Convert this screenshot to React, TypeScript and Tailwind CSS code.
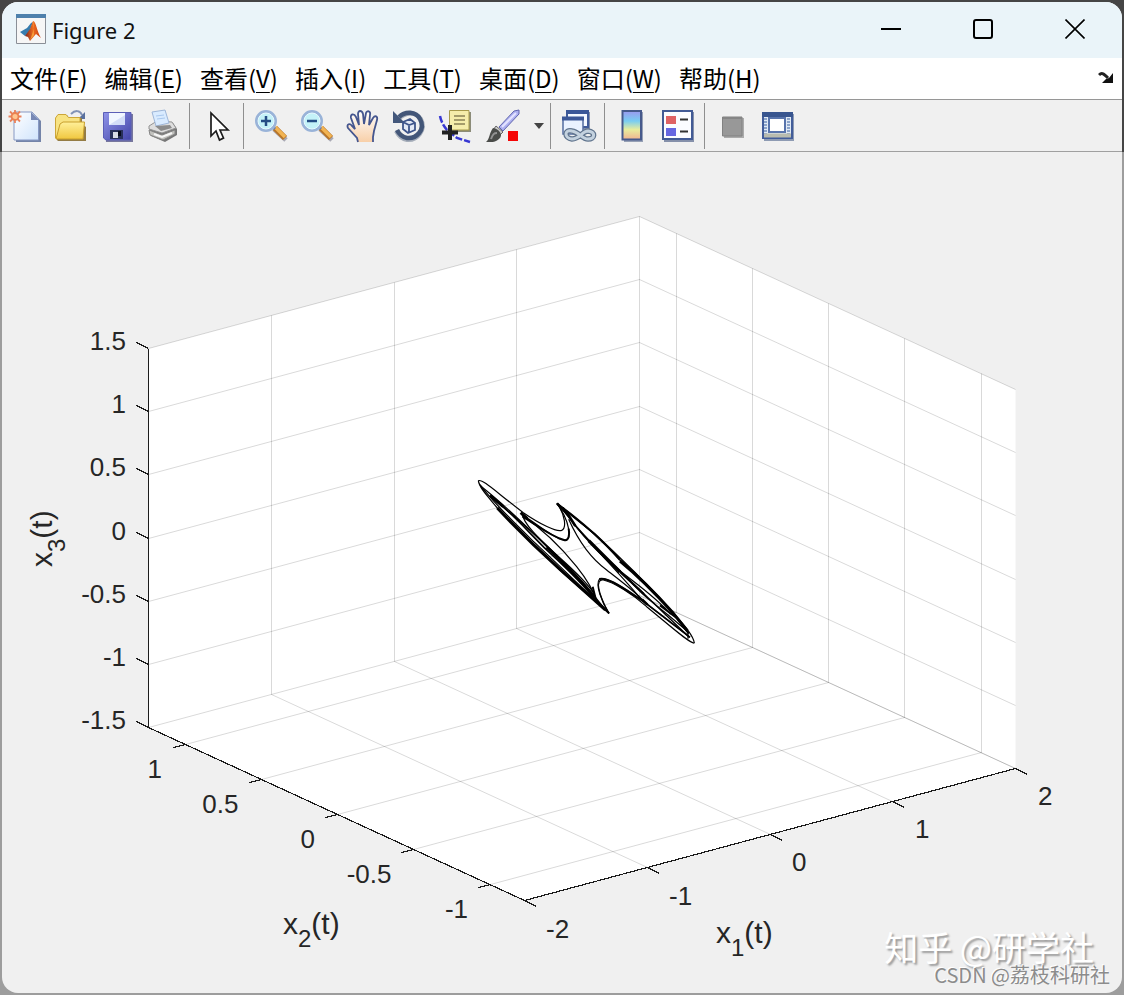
import React from "react";

type Point = [number, number];

type MenuItem = { label: string; mnemonic: string };

const menus: MenuItem[] = [
  { label: "文件", mnemonic: "F" },
  { label: "编辑", mnemonic: "E" },
  { label: "查看", mnemonic: "V" },
  { label: "插入", mnemonic: "I" },
  { label: "工具", mnemonic: "T" },
  { label: "桌面", mnemonic: "D" },
  { label: "窗口", mnemonic: "W" },
  { label: "帮助", mnemonic: "H" },
];

// corners of the axes box on the canvas
const BACK: Point = [639, 216];
const LEFT: Point = [-491, 132];
const RIGHT: Point = [376, 173];
const HEIGHT = 379;

const x1Ticks = ["-2", "-1", "0", "1", "2"];
const x2Ticks = ["1", "0.5", "0", "-0.5", "-1"];
const x3Ticks = ["1.5", "1", "0.5", "0", "-0.5", "-1", "-1.5"];

// a: share of the way to the left corner, b: to the right corner, c: down
const at = (a: number, b: number, c: number): Point => [
  Math.round(BACK[0] + LEFT[0] * a + RIGHT[0] * b) + 0.5,
  Math.round(BACK[1] + LEFT[1] * a + RIGHT[1] * b + HEIGHT * c) + 0.5,
];

const x2Share = (i: number) => (36.5 + i * 76.3) / 376;

const Line = ({ from, to }: { from: Point; to: Point }) => (
  <line x1={from[0]} y1={from[1]} x2={to[0]} y2={to[1]} />
);

const Tick = ({ from, dx, dy }: { from: Point; dx: number; dy: number }) => (
  <line x1={from[0]} y1={from[1]} x2={from[0] + dx} y2={from[1] + dy} />
);

const AxisTitle = ({ n }: { n: number }) => (
  <>
    x
    <tspan dy="13" fontSize="24">
      {n}
    </tspan>
    <tspan dy="-13">(t)</tspan>
  </>
);

const Attractor = () => (
  <g
    transform="translate(460 460) scale(0.33333)"
    fill="none"
    stroke="#000"
    strokeWidth="3.600"
    strokeLinejoin="round"
  >
    {/* left lobe */}
    <path d="M55 62C68 56 110 98 190 158C240 192 290 217 305 211C320 204 316 165 291 130" />
    <path d="M186 163C220 186 260 218 295 235C315 244 326 241 327 226C328 198 312 160 291 130" />
    <path d="M188 170C225 192 270 228 312 240C326 244 330 225 326 206" strokeWidth="6" />
    <path d="M55 62C58 84 84 110 112 144C170 208 250 284 310 340L447 460" />
    <path d="M112 144C170 206 240 274 300 328L436 450" strokeWidth="9" />
    <path d="M60 74C90 116 150 176 214 238C286 306 350 366 432 446" />
    <path d="M62 78C105 112 165 166 232 232C300 300 350 350 402 410" />
    <path d="M90 108C150 158 236 232 296 292C346 340 390 390 438 452" strokeWidth="4" />
    <path d="M110 124C160 164 190 200 252 262C310 316 362 362 404 418" strokeWidth="5" />
    <path d="M186 160C190 190 230 230 300 294C345 334 385 375 402 400" />
    <path d="M186 166C245 206 308 268 350 320C385 364 400 390 408 420" />
    <path d="M260 262C310 308 362 358 404 412" strokeWidth="8" />
    <path d="M398 380L408 420L447 460" strokeWidth="6" />
    <path d="M90 106L130 140M182 158L202 176" strokeWidth="9" />
    {/* right lobe */}
    <path d="M703 549C692 552 650 514 560 440C520 404 460 366 430 360C406 356 412 398 447 460" />
    <path d="M690 532C650 500 570 438 500 390C460 366 430 350 418 358C406 372 424 425 447 460" />
    <path d="M418 357C440 350 480 378 548 422" strokeWidth="6" />
    <path d="M556 428C600 464 650 500 690 532" strokeWidth="5" />
    <path d="M703 549C700 528 676 500 640 458C580 392 490 300 404 222C350 180 320 156 291 130" />
    <path d="M300 138C340 166 374 196 404 222C430 246 456 272 480 300" strokeWidth="6" />
    <path d="M480 303C530 344 590 404 640 460L682 512" strokeWidth="9" />
    <path d="M291 130C350 174 420 236 480 300C560 370 630 440 686 520" />
    <path d="M302 140C330 180 390 246 450 304C520 370 580 430 688 532" strokeWidth="4" />
    <path d="M310 142C336 194 400 264 460 316C520 366 580 404 632 462" />
    <path d="M326 178C354 240 390 294 440 330C480 362 520 390 556 428" />
    <path d="M340 190C380 240 470 330 550 425" />
    <path d="M386 242C420 276 450 306 480 336" strokeWidth="10" />
    <path d="M480 336L552 402M600 436L650 474L686 520" strokeWidth="6" />
    <path d="M500 350C545 410 600 440 684 516V536" />
    <path d="M291 130L326 166L346 198M546 418L562 434" strokeWidth="8" />
  </g>
);

const Plot = () => (
  <svg
    viewBox="2 152 1120 841"
    className="block w-full font-['Liberation_Sans',Arial,sans-serif]"
    role="img"
    aria-label="Figure 2"
  >
    <path d="M639.5 216.5L1015.5 389.5V768L525 901L148.5 727.5V348.5Z" fill="#fff" />

    <g stroke="#000" strokeOpacity="0.15">
      {x1Ticks.map((t, i) => (
        <React.Fragment key={t}>
          <Line from={at(i / 4, 0, 0)} to={at(i / 4, 0, 1)} />
          <Line from={at(i / 4, 0, 1)} to={at(i / 4, 1, 1)} />
        </React.Fragment>
      ))}
      {x2Ticks.map((t, i) => (
        <React.Fragment key={t}>
          <Line from={at(0, x2Share(i), 0)} to={at(0, x2Share(i), 1)} />
          <Line from={at(0, x2Share(i), 1)} to={at(1, x2Share(i), 1)} />
        </React.Fragment>
      ))}
      {x3Ticks.map((t, i) => (
        <React.Fragment key={t}>
          <Line from={at(1, 0, i / 6)} to={at(0, 0, i / 6)} />
          <Line from={at(0, 0, i / 6)} to={at(0, 1, i / 6)} />
        </React.Fragment>
      ))}
    </g>

    <g stroke="#1c1c1c" strokeWidth="1.200" shapeRendering="crispEdges">
      <Line from={at(1, 0, 0)} to={at(1, 0, 1)} />
      <Line from={at(1, 0, 1)} to={at(1, 1, 1)} />
      <Line from={at(1, 1, 1)} to={at(0, 1, 1)} />
      {x3Ticks.map((t, i) => (
        <Tick key={t} from={at(1, 0, i / 6)} dx={-12} dy={-6} />
      ))}
      {x2Ticks.map((t, i) => (
        <Tick key={t} from={at(1, x2Share(i), 1)} dx={-12} dy={3} />
      ))}
      {x1Ticks.map((t, i) => (
        <Tick key={t} from={at(1 - i / 4, 1, 1)} dx={12} dy={6} />
      ))}
    </g>

    <Attractor />

    <g fill="#262626" fontSize="26">
      {x3Ticks.map((t, i) => (
        <text key={t} x="126" y={350 + i * 63.2} textAnchor="end">
          {t}
        </text>
      ))}
      {x2Ticks.map((t, i) => (
        <text key={t} x={162 + i * 76.5} y={778 + i * 35} textAnchor="end">
          {t}
        </text>
      ))}
      {x1Ticks.map((t, i) => (
        <text key={t} x={546 + i * 123} y={938 - i * 33.3}>
          {t}
        </text>
      ))}
    </g>
    <g fill="#262626" fontSize="30">
      <text x="283" y="934">
        <AxisTitle n={2} />
      </text>
      <text x="716" y="943">
        <AxisTitle n={1} />
      </text>
      <text transform="translate(52 567) rotate(-90)">
        <AxisTitle n={3} />
      </text>
    </g>
  </svg>
);

const NewIcon = () => (
  <>
    <path d="M7 4H25L32 11V32H7Z" fill="#7484a8" />
    <path d="M5 2H23L29.500 9V30H5Z" fill="url(#page)" stroke="#8799c4" />
    <path d="M22 2V10H30Z" fill="#7788b5" />
    <path d="M6 0V13M-.5 6.500H12.500M1 1.500L11 11.500M11 1.500L1 11.500" stroke="#e9825c" strokeWidth="1.800" />
    <circle cx="6" cy="6.500" r="3.500" fill="#ffc690" stroke="#ea8152" strokeWidth="1.800" />
  </>
);

const OpenIcon = () => (
  <>
    <path d="M16 4C20 0 25 0 27 5" fill="none" stroke="#8293b6" strokeWidth="2" />
    <path d="M30 2V9H23Z" fill="#5b719e" />
    <path d="M2 30V8L4 5H12L14 8H27V14L31 17V31H3Z" fill="#947c45" />
    <path d="M.5 28V8L3 4.500H11L13.500 7.500H25V28Z" fill="#f8e382" stroke="#cda638" />
    <path d="M1 29L5 14L8 12H29.500L28 29Z" fill="url(#folder)" stroke="#c89f2d" />
  </>
);

const SaveIcon = () => (
  <>
    <path d="M4 4H32V32H5Z" fill="#77779d" />
    <path d="M2.500 2.500H30V30H5L2.500 28Z" fill="url(#disk)" stroke="#5b5eb7" />
    <path d="M8 3H24V15H8Z" fill="#f1f6ff" />
    <path d="M24 15L8 15L24 5Z" fill="#d3ddf8" />
    <path d="M9 20H22V29H9Z" fill="#28305a" />
    <path d="M12 22H17V28H12Z" fill="#d7dbe5" />
    <path d="M17 21H20V26H17Z" fill="#080c1c" />
  </>
);

const PrintIcon = () => (
  <>
    <path d="M2 17L9 12L26 13L30 19V25L18 32L4 26Z" fill="#777" />
    <path d="M2 16L10 11L25 12L29 18L15 23L2 19Z" fill="#dedede" stroke="#939393" />
    <path d="M5 2L18 0L22 13L9 16Z" fill="#d9ebff" stroke="#9eb6d8" />
    <path d="M9 6L17 5M10 9L18 8" stroke="#a9c8ee" />
    <path d="M2 20L15 25L28 20V24L16 30L3 25Z" fill="#c2c2be" stroke="#858585" />
    <path d="M8 16L23 15L25 18L14 21Z" fill="#8b8b8b" />
    <path d="M7 24L15 27L25 23" fill="none" stroke="#f6f6f6" strokeWidth="2" />
  </>
);

const PointerIcon = () => (
  <path
    d="M10 3V26L15 21L18.500 30L22.500 28L19 20H27Z"
    fill="#fff"
    stroke="#1c1c1c"
    strokeWidth="1.700"
  />
);

const Magnifier = ({ plus }: { plus?: boolean }) => (
  <>
    <path d="M19 19L31 30" stroke="#a9a9b4" strokeWidth="5" />
    <path d="M20 18L30 28" stroke="#b87527" strokeWidth="6" />
    <path d="M20 17L30 27" stroke="#f2b453" strokeWidth="3.500" />
    <path d="M17 16L20 19" stroke="#707fa5" strokeWidth="3" />
    <circle cx="11" cy="11" r="9.500" fill="#c4f2f8" stroke="#99b3d8" strokeWidth="3" />
    <circle cx="11" cy="11" r="8" fill="none" stroke="#e7faff" />
    <path d="M6 11H16" stroke="#244d85" strokeWidth="2.500" />
    {plus && <path d="M11 6V16" stroke="#244d85" strokeWidth="2.500" />}
  </>
);

const HandIcon = () => (
  <path
    d="M11 32L10 28L1 18C-1 14 3 13 5 16L8 19L4 8C3 4 7 3 9 7L12 15L11 4C11 0 15 0 16 4L17 14L19 3C20 0 24 1 23 5L22 15L26 8C28 5 31 6 30 10L27 21L26 27V32"
    fill="url(#skin)"
    stroke="#45568f"
    strokeWidth="1.800"
  />
);

const RotateIcon = () => (
  <>
    <path d="M6 9C12 2 23 2 28 9C34 20 24 31 14 30C9 29 5 25 3 21" fill="none" stroke="#a5adb9" strokeWidth="4" />
    <path d="M6 7C12 1 23 1 27 9C33 20 23 29 14 28C9 27 6 24 4 20" fill="none" stroke="#435678" strokeWidth="4.500" />
    <path d="M0 1L0 13H12Z" fill="#43577b" />
    <path d="M10 12L17 9L22 13V20L15 23L10 19Z" fill="#e3e9f5" />
    <path d="M10 12L17 9L22 13V20L15 23L10 19ZM10 12L16 15L22 13M16 15V23" fill="none" stroke="#3f568b" strokeWidth="1.800" />
  </>
);

const DataCursorIcon = () => (
  <>
    <path d="M1 6C2 11 4 15 8 20L18 28L31 32" fill="none" stroke="#3737d2" strokeWidth="2.500" strokeDasharray="7 2" />
    <path d="M12 2H32V22H12Z" fill="#8c8c79" />
    <path d="M10.500 .5H30V20H10.500Z" fill="#f5edab" stroke="#a79a4b" />
    <path d="M15 6H26M15 10H26M15 14H26" stroke="#898157" strokeWidth="1.500" />
    <path d="M11 15V30M3 22.500H19" stroke="#222" strokeWidth="4" />
  </>
);

const BrushIcon = () => (
  <>
    <path d="M14 17L29 1L34 0V4L18 21Z" fill="#adb0f0" stroke="#6065ad" />
    <path d="M17 17L31 3" stroke="#e3e3ff" strokeWidth="2" />
    <path d="M11 16L18 22L15 25L8 20Z" fill="#c8c8c8" stroke="#666" />
    <path d="M1 32C5 29 4 23 8 18C14 19 19 25 14 29C10 33 6 32 1 32Z" fill="#4a4c49" />
    <path d="M6 29C8 24 9 23 12 23" fill="none" stroke="#929292" strokeWidth="2" />
    <path d="M23 21H33V31H23Z" fill="#f50505" />
  </>
);

const LinkIcon = () => (
  <>
    <path d="M6 2H28V19H6Z" fill="#8490aa" />
    <path d="M5 1H26V17H5Z" fill="#f3f8ff" stroke="#405b99" strokeWidth="2" />
    <path d="M4 2H27" stroke="#3a5798" strokeWidth="4" />
    <path d="M1 8H21V24H1Z" fill="#eaf2ff" stroke="#536ca1" strokeWidth="1.500" />
    <path d="M0 8.500H22" stroke="#3b5797" strokeWidth="4" />
    <path d="M10 21C2 19 2 28 10 29C18 29 20 21 26 21C34 22 33 29 26 29C20 29 17 22 10 21" fill="none" stroke="#61758e" strokeWidth="5.500" />
    <path d="M10 21C2 19 2 28 10 29C18 29 20 21 26 21C34 22 33 29 26 29C20 29 17 22 10 21" fill="none" stroke="#c4d2df" strokeWidth="3" />
  </>
);

const ColorbarIcon = () => (
  <>
    <path d="M8 2H27V32H8Z" fill="#96a0b5" />
    <path d="M6.500 1H25V29.500H6.500Z" fill="url(#bar)" stroke="#46598b" strokeWidth="2" />
  </>
);

const LegendIcon = () => (
  <>
    <path d="M2 2H32V32H2Z" fill="#8590aa" />
    <path d="M1 1H30V29H1Z" fill="#fbfcff" stroke="#425a95" strokeWidth="2" />
    <path d="M4 6H14V14H4Z" fill="#df6264" />
    <path d="M4 18H14V26H4Z" fill="#6666e1" />
    <path d="M18 9.500H26M18 21.500H26" stroke="#333" strokeWidth="2" />
  </>
);

const HideToolsIcon = () => (
  <>
    <path d="M8 8H28V28H8Z" fill="#ababab" />
    <path d="M6.500 7H26V26H6.500Z" fill="#989898" stroke="#818181" />
    <path d="M7 8H26" stroke="#858585" strokeWidth="2" />
  </>
);

const ShowToolsIcon = () => (
  <>
    <path d="M2 4H32V31H2Z" fill="#8e9bb3" />
    <path d="M1 3H30V28H1Z" fill="#e1eaf5" stroke="#425d9a" strokeWidth="2" />
    <path d="M0 4.500H31" stroke="#38558f" strokeWidth="5" />
    <path d="M3.500 8V24M26.500 8V24" stroke="#8ca4ca" strokeWidth="3" strokeDasharray="2 1" />
    <path d="M2 25.500H29" stroke="#b9bcaf" strokeWidth="4" />
    <path d="M7 8H23V22H7Z" fill="#fff" stroke="#5874ac" strokeWidth="2" />
  </>
);

const Tool = ({ label, children }: { label: string; children: React.ReactNode }) => (
  <button type="button" aria-label={label} className="h-8 w-8 shrink-0">
    <svg viewBox="0 0 32 32" className="block h-8 w-8 overflow-visible" aria-hidden="true">
      {children}
    </svg>
  </button>
);

const Group = ({ children }: { children: React.ReactNode }) => (
  <div className="flex h-[46px] items-center gap-3.5 border-r border-[#8f8f8f] pr-2.5 pl-[11px]">
    {children}
  </div>
);

const Gradients = () => (
  <svg className="absolute h-0 w-0" aria-hidden="true">
    <defs>
      <linearGradient id="page" x2="1" y2="1">
        <stop stopColor="#fff" />
        <stop offset="1" stopColor="#d0e4fc" />
      </linearGradient>
      <linearGradient id="folder" x2="0" y2="1">
        <stop stopColor="#fff09a" />
        <stop offset="1" stopColor="#f0c73f" />
      </linearGradient>
      <linearGradient id="disk" x2="1" y2="1">
        <stop stopColor="#9094e9" />
        <stop offset="1" stopColor="#4345a8" />
      </linearGradient>
      <linearGradient id="skin" x2="0" y2="1">
        <stop stopColor="#fff" />
        <stop offset="1" stopColor="#f8cfa8" />
      </linearGradient>
      <linearGradient id="bar" x2="0" y2="1">
        <stop stopColor="#9b98ee" />
        <stop offset=".35" stopColor="#78cdf2" />
        <stop offset=".65" stopColor="#e8ed9d" />
        <stop offset="1" stopColor="#f1b391" />
      </linearGradient>
      <linearGradient id="flame" x2="1">
        <stop stopColor="#7c241b" />
        <stop offset=".5" stopColor="#ef6c20" />
        <stop offset="1" stopColor="#c63d12" />
      </linearGradient>
    </defs>
  </svg>
);

const TitleBar = () => (
  <header className="flex h-14 items-center bg-[#eaf4f9] pr-px pb-0.5 pl-3.5">
    <svg viewBox="0 0 30 30" className="h-[30px] w-[30px]" aria-hidden="true">
      <path d="M.5 .5H29.500V29.500H.5Z" fill="#f6f6f6" stroke="#8a8f97" />
      <path d="M0 0H30V4H0Z" fill="#4d80ac" />
      <path d="M4 18L11 14L15 9L17 8L13 19L9 22Z" fill="#377cae" />
      <path d="M9 22L14 15L17 7C20 7 21 18 25 24L20 20L14 27L12 23Z" fill="url(#flame)" />
      <path d="M17 7C19 12 17 19 14 26L18 21Z" fill="#f6a13d" />
    </svg>
    <h1 className="ml-1.5 pt-0.5 font-['Noto_Sans','Open_Sans',sans-serif] text-[22px] text-[#111]">
      Figure 2
    </h1>
    <div className="ml-auto flex h-full">
      <button type="button" aria-label="最小化" className="flex w-[92px] items-center justify-center">
        <svg viewBox="0 0 20 20" className="h-5 w-5" stroke="#000" strokeWidth="2">
          <path d="M0 10H20" />
        </svg>
      </button>
      <button type="button" aria-label="最大化" className="flex w-[92px] items-center justify-center">
        <svg viewBox="0 0 20 20" className="h-5 w-5" fill="none" stroke="#000" strokeWidth="2">
          <rect x="1" y="1" width="18" height="18" rx="2" />
        </svg>
      </button>
      <button type="button" aria-label="关闭" className="flex w-[92px] items-center justify-center">
        <svg viewBox="0 0 20 20" className="h-5 w-5" stroke="#000" strokeWidth="1.600">
          <path d="M.5 .5L19.500 19.500M19.500 .5L.5 19.500" />
        </svg>
      </button>
    </div>
  </header>
);

const MenuBar = () => (
  <nav className="flex h-[42px] items-center gap-[17px] border-b border-[#969696] bg-white pr-2 pb-0.5 pl-2 font-['Noto_Sans_CJK_SC',sans-serif] text-2xl text-black">
    {menus.map((m) => (
      <button key={m.mnemonic} type="button" className="shrink-0 whitespace-nowrap">
        {m.label}(
        <span className="underline decoration-1 underline-offset-4">{m.mnemonic}</span>)
      </button>
    ))}
    <button type="button" aria-label="停靠" className="ml-auto">
      <svg viewBox="0 0 16 12" className="h-3 w-4">
        <path d="M1 3C4 0 6 2 10 6" fill="none" stroke="#222" strokeWidth="3" />
        <path d="M15 1V11H4L8 7L11 6Z" fill="#111" />
      </svg>
    </button>
  </nav>
);

const ToolBar = () => (
  <div className="flex h-[52px] items-center border-b border-[#a0a0a0]">
    <div className="flex h-[46px] items-center gap-3.5 border-r border-[#8f8f8f] pr-2.5 pl-[7px]">
      <Tool label="新建"><NewIcon /></Tool>
      <Tool label="打开"><OpenIcon /></Tool>
      <Tool label="保存"><SaveIcon /></Tool>
      <Tool label="打印"><PrintIcon /></Tool>
    </div>
    <Group>
      <Tool label="编辑绘图"><PointerIcon /></Tool>
    </Group>
    <div className="flex h-[46px] items-center border-r border-[#8f8f8f] pr-0.5 pl-[11px]">
      <div className="flex gap-3.5">
        <Tool label="放大"><Magnifier plus /></Tool>
        <Tool label="缩小"><Magnifier /></Tool>
        <Tool label="平移"><HandIcon /></Tool>
        <Tool label="三维旋转"><RotateIcon /></Tool>
        <Tool label="数据游标"><DataCursorIcon /></Tool>
        <Tool label="刷亮"><BrushIcon /></Tool>
      </div>
      <button type="button" aria-label="刷亮颜色" className="flex h-8 w-[31px] items-center justify-end pr-1">
        <svg viewBox="0 0 10 6" className="h-1.5 w-2.5">
          <path d="M0 0H10L5 6Z" fill="#444" />
        </svg>
      </button>
    </div>
    <Group>
      <Tool label="链接绘图"><LinkIcon /></Tool>
    </Group>
    <Group>
      <Tool label="颜色栏"><ColorbarIcon /></Tool>
      <Tool label="图例"><LegendIcon /></Tool>
    </Group>
    <div className="flex items-center gap-3.5 pl-[11px]">
      <Tool label="隐藏绘图工具"><HideToolsIcon /></Tool>
      <Tool label="显示绘图工具"><ShowToolsIcon /></Tool>
    </div>
  </div>
);

export default function App() {
  return (
    <div className="min-h-screen bg-[#999] bg-[linear-gradient(#454545_152px,#9d9d9d_152px)] p-0.5">
      <Gradients />
      <div className="relative overflow-hidden rounded-2xl bg-[#f0f0f0]">
        <TitleBar />
        <MenuBar />
        <ToolBar />
        <main>
          <Plot />
        </main>
        <div className="absolute right-3 bottom-1.5 text-right font-['Noto_Sans_CJK_SC',sans-serif]">
          <p className="mr-4 text-[34px] leading-8 text-white [text-shadow:2px_2px_2px_#999]">
            知乎 @研学社
          </p>
          <p className="text-xl leading-6 text-[#8c8c8c] [text-shadow:-1px_-1px_0_#fff]">
            CSDN @荔枝科研社
          </p>
        </div>
      </div>
    </div>
  );
}
